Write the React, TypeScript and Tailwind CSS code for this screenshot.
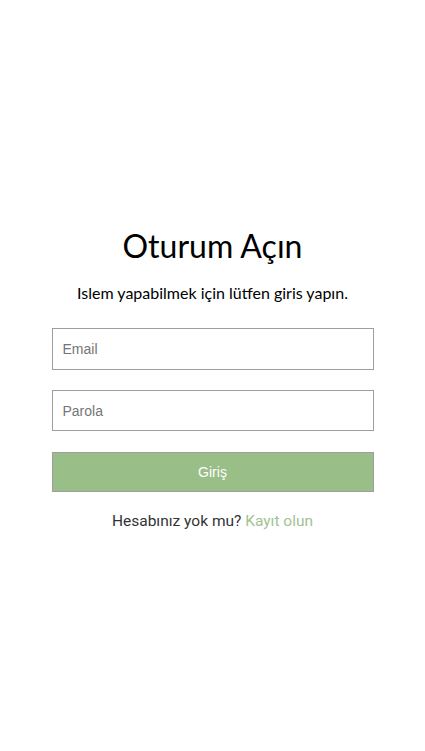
export default function App() {
  return (
    <div className="min-h-screen bg-white flex flex-col items-center pt-[226px]">
      <h1 className="text-[32px] leading-[40px] text-black font-['Lato',sans-serif]">
        Oturum Açın
      </h1>
      <p className="mt-[17px] text-[16px] leading-[20px] text-black font-['Lato',sans-serif]">
        Islem yapabilmek için lütfen giris yapın.
      </p>

      <form
        className="mt-[25px] w-[322px] flex flex-col font-['Liberation_Sans',Arial,sans-serif]"
        onSubmit={(e) => e.preventDefault()}
      >
        <input
          type="email"
          placeholder="Email"
          className="h-[42px] border border-[#9e9e9e] px-[10px] text-[14px] placeholder:text-[#757575] outline-none"
        />
        <input
          type="password"
          placeholder="Parola"
          className="mt-[20px] h-[41px] border border-[#9e9e9e] px-[10px] text-[14px] placeholder:text-[#757575] outline-none"
        />
        <button
          type="submit"
          className="mt-[21px] h-[40px] bg-[#9abe87] border border-[#9e9e9e] text-white text-[14px]"
        >
          Giriş
        </button>
      </form>

      <p className="mt-[18px] text-[15.5px] text-[#333] font-['Roboto',sans-serif]">
        Hesabınız yok mu?{" "}
        <a href="#" className="text-[#a3c292]">
          Kayıt olun
        </a>
      </p>
    </div>
  );
}
